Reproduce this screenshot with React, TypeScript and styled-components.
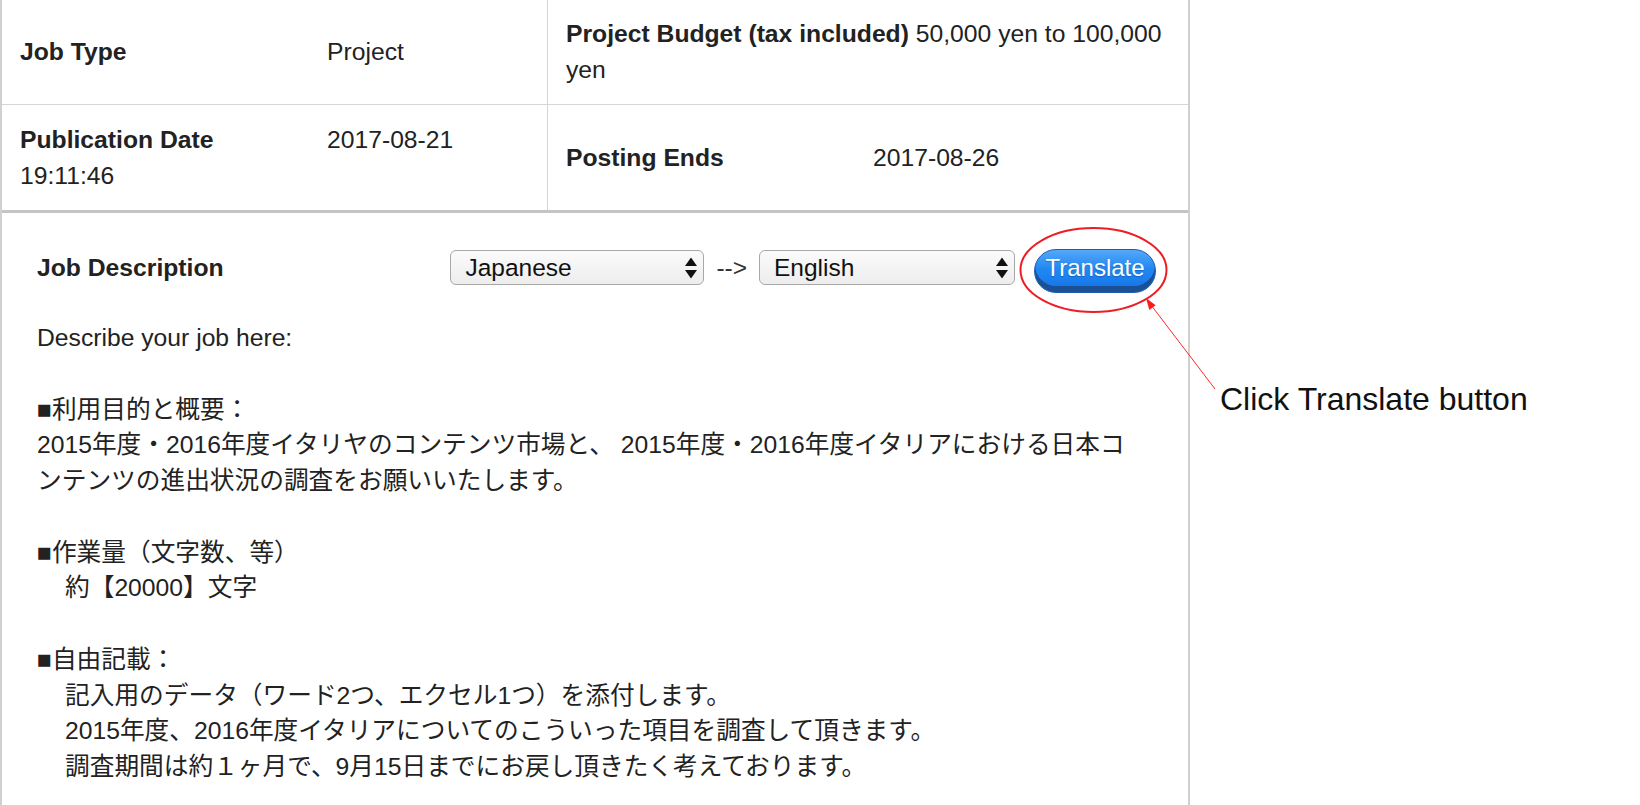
import React from 'react'
import styled, { createGlobalStyle } from 'styled-components'

const GlobalStyle = createGlobalStyle`
html, body {
  margin: 0;
  padding: 0;
  background: #fff;
}
body {
  font-family: "Liberation Sans", "Noto Sans CJK JP", sans-serif;
  color: #222;
  overflow: hidden;
}
`

interface DescLine {
  text: string
  indent?: boolean
}

const descLines: DescLine[] = [
  { text: 'Describe your job here:' },
  { text: '' },
  { text: '■利用目的と概要：' },
  { text: '2015年度・2016年度イタリヤのコンテンツ市場と、 2015年度・2016年度イタリアにおける日本コンテンツの進出状況の調査をお願いいたします。' },
  { text: '' },
  { text: '■作業量（文字数、等）' },
  { text: '約【20000】文字', indent: true },
  { text: '' },
  { text: '■自由記載：' },
  { text: '記入用のデータ（ワード2つ、エクセル1つ）を添付します。', indent: true },
  { text: '2015年度、2016年度イタリアについてのこういった項目を調査して頂きます。', indent: true },
  { text: '調査期間は約１ヶ月で、9月15日までにお戻し頂きたく考えております。', indent: true },
]

const UpDownIcon = () => (
  <svg width="12" height="21" viewBox="0 0 12 21">
    <polygon points="0,8.5 6,0 12,8.5" fill="#111" />
    <polygon points="0,12.5 6,21 12,12.5" fill="#111" />
  </svg>
)

const LangSelect: React.FC<{ width: number; value: string; options: string[] }> = ({ width, value, options }) => (
  <SelectWrap $width={width}>
    <Select defaultValue={value}>
      {options.map(o => (
        <option key={o}>{o}</option>
      ))}
    </Select>
    <SelectArrow>
      <UpDownIcon />
    </SelectArrow>
  </SelectWrap>
)

const App: React.FC = () => {
  const langs = ['Japanese', 'English', 'Chinese', 'Korean', 'Italian']
  return (
    <>
      <GlobalStyle />
      <Page>
        <Panel>
          <InfoRow $height={105}>
            <Cell>
              <CellText>
                <Label>Job Type</Label>Project
              </CellText>
            </Cell>
            <Cell $divider>
              <CellText>
                <Label>Project Budget (tax included)</Label> 50,000 yen to 100,000 yen
              </CellText>
            </Cell>
          </InfoRow>
          <InfoRow $height={108} $heavy>
            <Cell>
              <CellText>
                <Label>Publication Date</Label>2017-08-21 19:11:46
              </CellText>
            </Cell>
            <Cell $divider>
              <CellText>
                <Label>Posting Ends</Label>2017-08-26
              </CellText>
            </Cell>
          </InfoRow>

          <DescSection>
            <DescHeader>
              <DescTitle>Job Description</DescTitle>
              <Controls>
                <LangSelect width={254} value="Japanese" options={langs} />
                <ArrowText>--&gt;</ArrowText>
                <LangSelect width={256} value="English" options={langs} />
                <TranslateButton type="button">Translate</TranslateButton>
              </Controls>
            </DescHeader>
            <DescBody>
              {descLines.map((l, i) => (
                <Line key={i} $indent={l.indent}>
                  {l.text}
                </Line>
              ))}
            </DescBody>
          </DescSection>
        </Panel>

        <Aside>
          <Caption>Click Translate button</Caption>
        </Aside>

        {/* annotation drawn over the screenshot */}
        <Overlay width="1640" height="805" viewBox="0 0 1640 805">
          <ellipse cx="1093.5" cy="270" rx="73" ry="42" fill="none" stroke="#ee1c25" strokeWidth="2" />
          <line x1="1215" y1="389" x2="1151" y2="305" stroke="#ff2a2a" strokeWidth="1" />
          <polygon points="1146,298 1155.6,305.2 1149.3,310" fill="#ff1a1a" />
        </Overlay>
      </Page>
    </>
  )
}

const Page = styled.div`
position: relative;
display: flex;
width: 1640px;
height: 805px;
overflow: hidden;
`

const Panel = styled.div`
width: 1190px;
height: 805px;
box-sizing: border-box;
border-left: 2px solid #d0d0d0;
border-right: 2px solid #d0d0d0;
`

const InfoRow = styled.div<{ $height: number; $heavy?: boolean }>`
display: grid;
grid-template-columns: 545px 1fr;
height: ${p => p.$height}px;
box-sizing: border-box;
border-bottom: ${p => (p.$heavy ? '3px solid #c4c4c4' : '1px solid #d6d6d6')};
`

const Cell = styled.div<{ $divider?: boolean }>`
display: flex;
align-items: center;
padding: 0 19px 0 18px;
border-left: ${p => (p.$divider ? '1px solid #d6d6d6' : 'none')};
`

const CellText = styled.div`
font-size: 24.7px;
line-height: 36px;
color: #222;
`

const Label = styled.span`
display: inline-block;
min-width: 307px;
font-weight: bold;
`

const DescSection = styled.div`
padding: 36px 32px 0 35px;
`

const DescHeader = styled.div`
display: flex;
align-items: flex-start;
height: 44px;
`

const DescTitle = styled.div`
font-size: 24.7px;
line-height: 38px;
font-weight: bold;
color: #222;
`

const Controls = styled.div`
margin-left: auto;
display: flex;
align-items: flex-start;
`

const SelectWrap = styled.div<{ $width: number }>`
position: relative;
width: ${p => p.$width}px;
height: 35px;
margin-top: 1px;
`

const Select = styled.select`
appearance: none;
-webkit-appearance: none;
width: 100%;
height: 100%;
box-sizing: border-box;
padding: 0 30px 0 14px;
border: 1px solid #a8a8a8;
border-radius: 6px;
background: linear-gradient(#fbfbfb, #ededed);
font-family: "Liberation Sans", sans-serif;
font-size: 24.5px;
color: #111;
outline: none;
`

const SelectArrow = styled.span`
position: absolute;
right: 7px;
top: 50%;
transform: translateY(-50%);
display: flex;
pointer-events: none;
`

const ArrowText = styled.span`
margin: 0 12px 0 12px;
font-size: 24.5px;
line-height: 37px;
color: #333;
`

const TranslateButton = styled.button`
margin-left: 19px;
width: 122px;
height: 44px;
box-sizing: border-box;
padding: 0 0 6px;
border: 1px solid #1a5db4;
border-radius: 22px;
background: linear-gradient(to bottom, #55a8f8 0%, #2088f2 45%, #1473e6 100%);
box-shadow: inset 0 -6px 0 #1d4f93;
color: #fff;
font-family: "Liberation Sans", sans-serif;
font-size: 24px;
text-shadow: 0 1px 1px rgba(0, 40, 100, 0.35);
`

const DescBody = styled.div`
padding: 27px 20px 0 0;
font-size: 24.7px;
line-height: 35.75px;
color: #222;
`

const Line = styled.div<{ $indent?: boolean }>`
min-height: 35.75px;
padding-left: ${p => (p.$indent ? '28px' : '0')};
`

const Aside = styled.div`
flex: 1;
padding: 381px 0 0 30px;
`

const Caption = styled.div`
font-size: 32px;
line-height: 36px;
color: #111;
white-space: nowrap;
`

const Overlay = styled.svg`
position: absolute;
left: 0;
top: 0;
pointer-events: none;
`

export default App
